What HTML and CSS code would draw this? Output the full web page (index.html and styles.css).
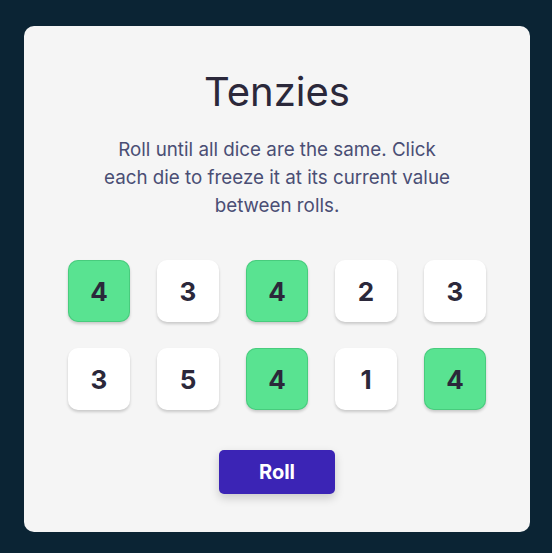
FILE: index.html
```html
<!DOCTYPE html>
<html lang="en">
<head>
<meta charset="utf-8">
<title>Tenzies</title>
<link rel="stylesheet" href="styles.css">
</head>
<body>
<main class="card">
  <h1 class="title">Tenzies</h1>
  <p class="instructions">Roll until all dice are the same. Click each die to freeze it at its current value between rolls.</p>
  <div class="dice">
    <button class="die held">4</button>
    <button class="die">3</button>
    <button class="die held">4</button>
    <button class="die">2</button>
    <button class="die">3</button>
    <button class="die">3</button>
    <button class="die">5</button>
    <button class="die held">4</button>
    <button class="die">1</button>
    <button class="die held">4</button>
  </div>
  <button class="roll">Roll</button>
</main>
</body>
</html>
```
FILE: styles.css
```css
* { box-sizing: border-box; }
html, body { margin: 0; }
body {
  background: #0b2434;
  font-family: Inter, "Noto Sans", sans-serif;
  padding: 26px 22px 21px 24px;
}
.card {
  width: 506px;
  height: 506px;
  background: #f5f5f5;
  border-radius: 10px;
  display: flex;
  flex-direction: column;
  align-items: center;
  padding-top: 42px;
}
.title {
  margin: 0;
  font-size: 40px;
  font-weight: 400;
  line-height: 48px;
  color: #2b283a;
  letter-spacing: 0;
}
.instructions {
  margin: 20px 0 0;
  width: 354px;
  text-align: center;
  font-size: 18.8px;
  line-height: 28px;
  color: #4a4e74;
}
.dice {
  margin-top: 40px;
  display: grid;
  grid-template-columns: repeat(5, 62px);
  grid-auto-rows: 62px;
  column-gap: 27px;
  row-gap: 26px;
}
.die {
  border: none;
  border-radius: 10px;
  background: #ffffff;
  box-shadow: 0 2px 3px rgba(0, 0, 0, 0.18);
  font-family: Inter, "Noto Sans", sans-serif;
  font-size: 26px;
  font-weight: 700;
  color: #2b283a;
  padding: 0;
  display: flex;
  align-items: center;
  justify-content: center;
}
.die.held {
  background: #59e391;
  box-shadow: 0 2px 3px rgba(0, 0, 0, 0.18), inset 0 0 0 1px rgba(40, 160, 90, 0.35);
}
.roll {
  margin-top: 40px;
  width: 116px;
  height: 44px;
  border: none;
  border-radius: 5px;
  background: #3b24b5;
  color: #ffffff;
  font-family: Inter, "Noto Sans", sans-serif;
  font-size: 20px;
  font-weight: 700;
  box-shadow: 0 4px 10px rgba(0, 0, 0, 0.18);
  padding: 0;
}
```
